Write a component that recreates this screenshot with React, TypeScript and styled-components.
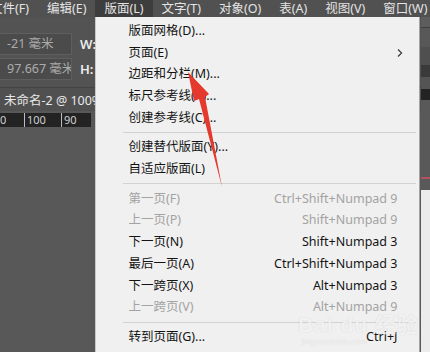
import React from "react";
import styled, { createGlobalStyle } from "styled-components";

const Global = createGlobalStyle`
  html, body { margin: 0; padding: 0; background: #585858; }
  body {
    width: 430px; height: 352px; overflow: hidden;
    font-family: "Noto Sans", "Noto Sans CJK SC", sans-serif;
  }
`;

const Frame = styled.div`
  position: relative;
  width: 430px;
  height: 352px;
  overflow: hidden;
  display: flex;
  flex-direction: column;
  background: #585858;
`;

const MenuBar = styled.div`
  flex: none;
  height: 17px;
  display: flex;
  margin-left: -19px;
  background: #515151;
  position: relative;
  z-index: 5;
`;

const MenuHeader = styled.div<{ $open?: boolean }>`
  position: relative;
  padding: 0 9px;
  font-size: 12.5px;
  line-height: 17px;
  color: #e4e4e4;
  white-space: nowrap;
  background: ${(p) => (p.$open ? "#3d3d3d" : "transparent")};
`;

const Dropdown = styled.div`
  position: absolute;
  top: 17px;
  left: 0;
  width: 325px;
  height: 340px;
  box-sizing: border-box;
  padding-top: 3px;
  background: #f0f0f0;
  border: 1px solid #a4a4a4;
  border-top: none;
  border-left-color: #c8c8c8;
`;

const Item = styled.div<{ $disabled?: boolean }>`
  height: 21.75px;
  display: grid;
  grid-template-columns: 1fr auto;
  align-items: center;
  padding: 0 22px 0 32px;
  font-size: 12.5px;
  line-height: 16px;
  white-space: nowrap;
  color: ${(p) => (p.$disabled ? "#a3a3a3" : "#141414")};
`;

const Shortcut = styled.span`
  text-align: right;
`;

const SubArrow = styled.svg`
  width: 6px;
  height: 8px;
  margin-right: -10px;
`;

const Separator = styled.div`
  height: 1px;
  margin: 3.4px 3px 3.35px 27px;
  background: #d2d2d2;
`;

const Workspace = styled.div`
  flex: 1;
  display: flex;
  min-height: 0;
`;

const LeftPane = styled.div`
  flex: 1;
  display: flex;
  flex-direction: column;
  min-width: 0;
`;

const Toolbar = styled.div`
  flex: none;
  height: 70px;
  box-sizing: border-box;
  padding-top: 16px;
  background: #535353;
  display: flex;
  flex-direction: column;
  gap: 3px;
`;

const ControlRow = styled.div`
  display: flex;
  align-items: center;
  gap: 8px;
  height: 22px;
`;

const Field = styled.div`
  width: 72px;
  height: 22px;
  box-sizing: border-box;
  padding-left: 7px;
  background: #4b4b4b;
  border: 1px solid #5e5e5e;
  border-left: none;
  color: #ababab;
  font-size: 12.5px;
  line-height: 20px;
  white-space: nowrap;
  overflow: hidden;
`;

const FieldLabel = styled.span`
  color: #ececec;
  font-size: 13px;
  font-weight: 600;
`;

const TabBar = styled.div`
  flex: none;
  height: 24px;
  box-sizing: border-box;
  border-top: 1px solid #444;
  background: #505050;
  display: flex;
  align-items: center;
  padding-left: 4px;
  color: #e8e8e8;
  font-size: 12.5px;
  white-space: nowrap;
`;

const RulerRow = styled.div`
  flex: none;
  margin-top: 2px;
  height: 14px;
  display: flex;
  background: #575757;
`;

const Ruler = styled.div`
  width: 91px;
  display: flex;
  background: #232323;
  color: #cfcfcf;
  font-size: 11px;
  line-height: 14px;
`;

const RulerSeg = styled.div<{ $w: number; $tick?: boolean }>`
  width: ${(p) => p.$w}px;
  box-sizing: border-box;
  padding-left: ${(p) => (p.$tick ? 2 : 0)}px;
  border-left: ${(p) => (p.$tick ? "1px solid #bdbdbd" : "none")};
`;

const Canvas = styled.div`
  flex: 1;
  background: #585858;
`;

const RightDock = styled.div`
  flex: none;
  width: 9px;
  display: flex;
  flex-direction: column;
`;

const DockBand = styled.div<{ $h?: number; $c: string }>`
  flex: ${(p) => (p.$h ? `none` : 1)};
  height: ${(p) => (p.$h ? `${p.$h}px` : "auto")};
  background: ${(p) => p.$c};
`;

const ArrowLayer = styled.svg`
  position: absolute;
  left: 0;
  top: 0;
  width: 430px;
  height: 352px;
  pointer-events: none;
  z-index: 10;
`;

const Watermark = styled.div`
  position: absolute;
  left: 298px;
  top: 313px;
  z-index: 9;
  display: flex;
  flex-direction: column;
  align-items: flex-start;
  color: rgba(250, 250, 250, 0.85);
  text-shadow: 0 0 1px rgba(170, 170, 170, 0.55);
  pointer-events: none;
  opacity: 0.8;
`;

const WmTitle = styled.div`
  font-family: "Liberation Sans", "Noto Sans CJK SC", sans-serif;
  font-size: 21px;
  font-weight: 700;
  line-height: 24px;
  letter-spacing: 1px;
`;

const WmSub = styled.div`
  font-family: "Liberation Sans", sans-serif;
  font-size: 8px;
  line-height: 10px;
  margin-left: 4px;
`;

type Entry =
  | { kind: "item"; label: string; shortcut?: string; disabled?: boolean; submenu?: boolean }
  | { kind: "sep" };

const entries: Entry[] = [
  { kind: "item", label: "版面网格(D)..." },
  { kind: "item", label: "页面(E)", submenu: true },
  { kind: "item", label: "边距和分栏(M)..." },
  { kind: "item", label: "标尺参考线(R)..." },
  { kind: "item", label: "创建参考线(C)..." },
  { kind: "sep" },
  { kind: "item", label: "创建替代版面(Y)..." },
  { kind: "item", label: "自适应版面(L)" },
  { kind: "sep" },
  { kind: "item", label: "第一页(F)", shortcut: "Ctrl+Shift+Numpad 9", disabled: true },
  { kind: "item", label: "上一页(P)", shortcut: "Shift+Numpad 9", disabled: true },
  { kind: "item", label: "下一页(N)", shortcut: "Shift+Numpad 3" },
  { kind: "item", label: "最后一页(A)", shortcut: "Ctrl+Shift+Numpad 3" },
  { kind: "item", label: "下一跨页(X)", shortcut: "Alt+Numpad 3" },
  { kind: "item", label: "上一跨页(V)", shortcut: "Alt+Numpad 9", disabled: true },
  { kind: "sep" },
  { kind: "item", label: "转到页面(G)...", shortcut: "Ctrl+J" },
];

const menus = ["文件(F)", "编辑(E)", "版面(L)", "文字(T)", "对象(O)", "表(A)", "视图(V)", "窗口(W)"];

const dock: { h?: number; c: string }[] = [
  { h: 10, c: "#5d5d5d" },
  { h: 1, c: "#3e3e3e" },
  { h: 19, c: "#585858" },
  { h: 18, c: "#4f4f4f" },
  { h: 12, c: "#3a3a3a" },
  { h: 12, c: "#545454" },
  { h: 11, c: "#232323" },
  { h: 77, c: "#595959" },
  { h: 2, c: "#b5505e" },
  { h: 11, c: "#595959" },
  { c: "#ececec" },
];

function LayoutMenu() {
  return (
    <Dropdown>
      {entries.map((e, i) =>
        e.kind === "sep" ? (
          <Separator key={i} />
        ) : (
          <Item key={i} $disabled={e.disabled}>
            <span>{e.label}</span>
            {e.submenu ? (
              <SubArrow viewBox="0 0 6 8">
                <path d="M1 0.5 L4.6 4 L1 7.5" fill="none" stroke="#333" strokeWidth="1.1" />
              </SubArrow>
            ) : (
              <Shortcut>{e.shortcut ?? ""}</Shortcut>
            )}
          </Item>
        )
      )}
    </Dropdown>
  );
}

export default function App() {
  return (
    <Frame>
      <Global />
      <MenuBar>
        {menus.map((m) => (
          <MenuHeader key={m} $open={m === "版面(L)"}>
            {m}
            {m === "版面(L)" && <LayoutMenu />}
          </MenuHeader>
        ))}
      </MenuBar>
      <Workspace>
        <LeftPane>
          <Toolbar>
            <ControlRow>
              <Field>-21 毫米</Field>
              <FieldLabel>W:</FieldLabel>
            </ControlRow>
            <ControlRow>
              <Field>97.667 毫米</Field>
              <FieldLabel>H:</FieldLabel>
            </ControlRow>
          </Toolbar>
          <TabBar>未命名-2 @ 100%</TabBar>
          <RulerRow>
            <Ruler>
              <RulerSeg $w={24}>0</RulerSeg>
              <RulerSeg $w={37} $tick>100</RulerSeg>
              <RulerSeg $w={30} $tick>90</RulerSeg>
            </Ruler>
          </RulerRow>
          <Canvas />
        </LeftPane>
        <RightDock>
          {dock.map((b, i) => (
            <DockBand key={i} $h={b.h} $c={b.c} />
          ))}
        </RightDock>
      </Workspace>
      <Watermark>
        <WmTitle>Bai du 经验</WmTitle>
        <WmSub>jingyan.baidu.com</WmSub>
      </Watermark>
      <ArrowLayer viewBox="0 0 430 352">
        <polygon
          points="188,72 209,94 205,97 222,187 199,99 194,101"
          fill="#e5392d"
        />
      </ArrowLayer>
    </Frame>
  );
}
